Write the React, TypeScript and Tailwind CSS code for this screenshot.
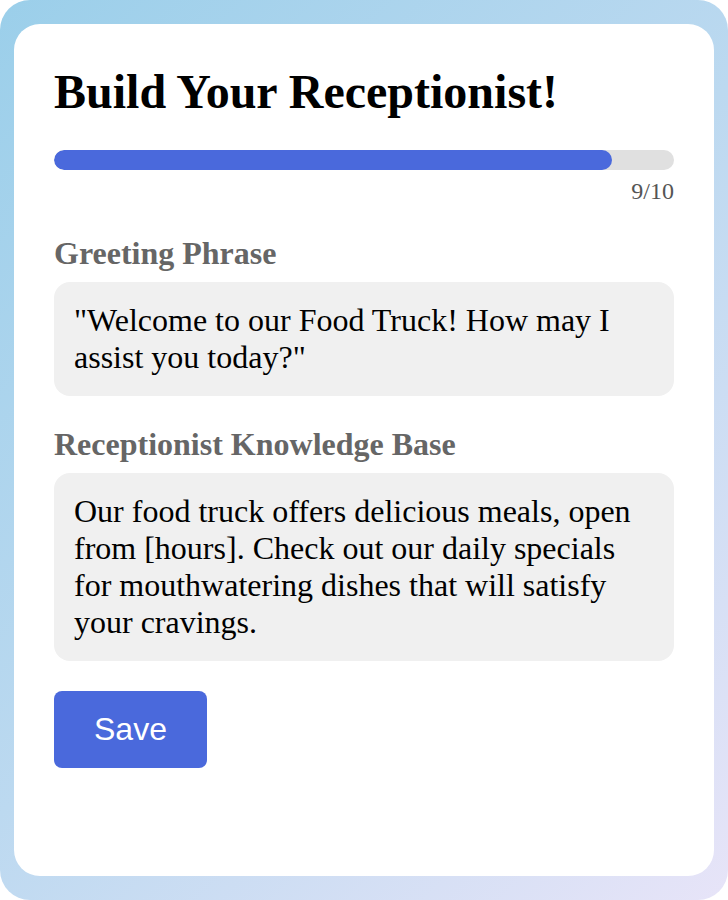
import React from 'react';

const SERIF = { fontFamily: '"Liberation Serif", "Times New Roman", serif' };

export default function App() {
  const step = 9;
  const total = 10;

  return (
    <div className="w-[728px] h-[900px] bg-white">
      <div className="h-full rounded-[30px] bg-[linear-gradient(135deg,#9bcfea_0%,#bcd9f0_50%,#e7e4f8_100%)] px-[14px] py-[24px] flex">
        <div className="flex-1 rounded-[26px] bg-white p-[40px] flex flex-col items-start" style={SERIF}>
          <h1 className="text-[48px] leading-[normal] font-bold text-black">Build Your Receptionist!</h1>

          {/* progress */}
          <div className="w-full shrink-0 mt-[31px] h-[20px] rounded-full bg-[#e0e0e0] overflow-hidden">
            <div className="h-full rounded-full bg-[#4a69dc]" style={{ width: `${(step / total) * 100}%` }} />
          </div>
          <div className="w-full mt-[8px] text-right text-[24px] leading-[normal] text-[#555]">
            {step}/{total}
          </div>

          <label className="mt-[30px] text-[32px] leading-[normal] font-bold text-[#666]">Greeting Phrase</label>
          <div className="w-full mt-[10px] rounded-[16px] bg-[#f0f0f0] p-[20px] text-[32px] leading-[normal] text-black">
            "Welcome to our Food Truck! How may I assist you today?"
          </div>

          <label className="mt-[30px] text-[32px] leading-[normal] font-bold text-[#666]">Receptionist Knowledge Base</label>
          <div className="w-full mt-[10px] rounded-[16px] bg-[#f0f0f0] p-[20px] text-[32px] leading-[normal] text-black">
            Our food truck offers delicious meals, open from [hours]. Check out our daily specials for mouthwatering
            dishes that will satisfy your cravings.
          </div>

          <button
            className="mt-[30px] rounded-[8px] bg-[#4a69dc] px-[40px] py-[20px] text-[32px] leading-[normal] text-white"
            style={{ fontFamily: '"Liberation Sans", Arial, sans-serif' }}
          >
            Save
          </button>
        </div>
      </div>
    </div>
  );
}
